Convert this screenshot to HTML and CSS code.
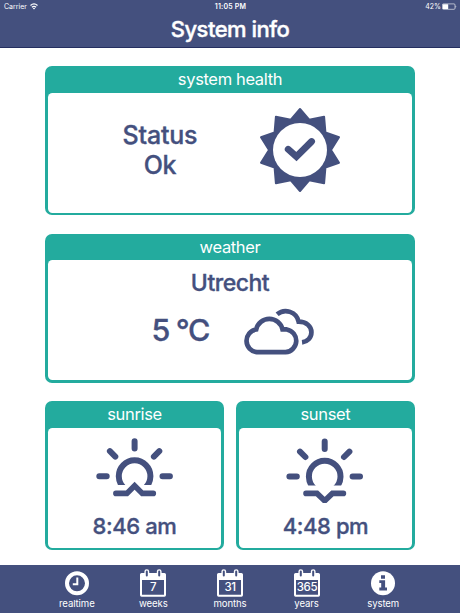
FILE: index.html
```html
<!DOCTYPE html>
<html lang="en">
<head>
<meta charset="utf-8">
<title>System info</title>
<link rel="stylesheet" href="styles.css">
</head>
<body>
<header class="top">
  <div class="status">
    <span class="carrier">Carrier
      <svg width="8" height="7" viewBox="0 0 8 7" fill="none" stroke="#fff" stroke-width="1.2"><path d="M.5 2.5Q4-.6 7.5 2.5M1.9 4.2Q4 2.4 6.1 4.2"/><path d="M2.8 5.2Q4 4.2 5.2 5.2L4 6.6z" fill="#fff" stroke="none"/></svg>
    </span>
    <span class="clock">11:05 PM</span>
    <span class="battery">42%
      <svg width="15" height="7" viewBox="0 0 15 7"><rect x=".4" y=".9" width="12.6" height="5.4" rx="1" fill="none" stroke="#fff" stroke-width=".6"/><rect x=".8" y="1.2" width="5.4" height="4.8" rx=".5" fill="#fff"/><path d="M13.6 2.4Q15 3.5 13.6 4.7z" fill="#fff"/></svg>
    </span>
  </div>
  <h1 class="title">System info</h1>
</header>

<main class="cards">
  <section class="card">
    <h2 class="card-head">system health</h2>
    <div class="card-body health">
      <p class="health-text">Status<br>Ok</p>
      <div class="health-icon">
        <svg width="84" height="88" viewBox="-42 -44 84 88">
          <path class="solid round" d="M0-41L9.200-30.300 24.100-33.200 25.400-17.600 39-12.700 31 0 39 12.700 25.400 17.600 24.100 33.200 9.200 30.300 0 41-9.200 30.300-24.100 33.200-25.400 17.600-39 12.700-31 0-39-12.700-25.400-17.600-24.100-33.200-9.200-30.300Z"/>
          <circle r="27" fill="#fff"/>
          <path class="check" d="M-11.800-.7L-3.600 6.600 11.600-8.500"/>
        </svg>
      </div>
    </div>
  </section>

  <section class="card">
    <h2 class="card-head">weather</h2>
    <div class="card-body">
      <p class="city">Utrecht</p>
      <div class="weather">
        <p class="temp">5 °C</p>
        <svg width="71.5" height="48" viewBox="0 0 70 47" class="line cloud">
          <path d="M13.500 44.200h28.200a11.200 11.200 0 0 0 1.200-22.200h-4.200a13.200 13.200 0 0 0-25.800 0A11.200 11.200 0 0 0 13.500 44.200z"/>
          <path d="M33.400 7.100A13 13 0 0 1 54.500 14.400C62 14.400 67 18.800 67 24.700C67 30 63 34 57.800 34.600"/>
        </svg>
      </div>
    </div>
  </section>

  <div class="pair">
    <section class="card">
      <h2 class="card-head">sunrise</h2>
      <div class="card-body sun">
        <svg width="78" height="66" viewBox="-38.600 -39.200 78 66" class="line">
          <clipPath id="horizon"><rect x="-30" y="-30" width="60" height="38.800"/></clipPath>
          <path d="M0-35v7.300M-24.700-25l5.400 5.400M24.700-25l-5.400 5.400M-35.300 0h7.400M35.300 0h-7.400"/>
          <path class="butt" clip-path="url(#horizon)" d="M-10.800 11.500A15.800 15.800 0 1 1 10.800 11.500"/>
          <path class="miter" d="M-18.700 17.200h11L0 9.600l7.700 7.600h11"/>
        </svg>
        <p class="time">8:46 am</p>
      </div>
    </section>
    <section class="card">
      <h2 class="card-head">sunset</h2>
      <div class="card-body sun">
        <svg width="78" height="66" viewBox="-38.700 -39.600 78 66" class="line">
          <path d="M0-35v7.300M-24.700-25l5.400 5.400M24.700-25l-5.400 5.400M-35.300 0h7.400M35.300 0h-7.400"/>
          <path class="butt" clip-path="url(#horizon)" d="M-10.800 11.500A15.800 15.800 0 1 1 10.800 11.500"/>
          <path class="miter" d="M-18.700 16.800h11L0 24.200l7.700-7.400h11"/>
        </svg>
        <p class="time">4:48 pm</p>
      </div>
    </section>
  </div>
</main>

<nav class="tabs">
  <a class="tab">
    <svg width="28" height="30" viewBox="0 0 28 30"><circle cx="14" cy="15.300" r="10" fill="none" stroke="#fff" stroke-width="4"/><path d="M14.300 9.500v6.800H9.800" fill="none" stroke="#fff" stroke-width="2"/></svg>
    <span>realtime</span>
  </a>
  <a class="tab">
    <svg width="28" height="30" viewBox="0 0 28 30"><use href="#cal"/><text class="day" x="14" y="23">7</text></svg>
    <span>weeks</span>
  </a>
  <a class="tab">
    <svg width="28" height="30" viewBox="0 0 28 30"><use href="#cal"/><text class="day" x="14" y="23">31</text></svg>
    <span>months</span>
  </a>
  <a class="tab">
    <svg width="28" height="30" viewBox="0 0 28 30">
      <defs><g id="cal">
        <path fill="#fff" fill-rule="evenodd" d="M2.600 4.900h22.800q1.600 0 1.600 1.600v20.600q0 1.600-1.600 1.600H2.600Q1 28.700 1 27.100V6.500Q1 4.900 2.600 4.900zM3 12v14.700h22V12z"/>
        <path d="M7.800 3.600v4M20.200 3.600v4" stroke="#fff" stroke-width="4.800" stroke-linecap="round"/>
        <path d="M7.800 3.600v4M20.200 3.600v4" stroke="#44507e" stroke-width="2" stroke-linecap="round"/>
      </g></defs>
      <use href="#cal"/><text class="day" x="14" y="23">365</text></svg>
    <span>years</span>
  </a>
  <a class="tab">
    <svg width="28" height="30" viewBox="0 0 28 30"><circle cx="14" cy="15.300" r="12" fill="#fff"/><path fill="#44507e" d="M12 7.300h4v3.400h-4zM10.300 12.300h5.800v7.200h1.900v2.900h-7.700v-2.900h1.900v-4.400h-1.900z"/></svg>
    <span>system</span>
  </a>
</nav>
</body>
</html>
```
FILE: styles.css
```css
* { box-sizing: border-box; }
body {
  margin: 0;
  height: 613px;
  display: flex;
  flex-direction: column;
  overflow: hidden;
  background: #fff;
  color: #44507e;
  font-family: Inter, "Liberation Sans", sans-serif;
}
h1, h2, p { margin: 0; }
svg { display: block; flex: none; }

.top {
  height: 48px;
  background: #44507e;
  border-bottom: 1px solid #252f60;
  color: #fff;
}
.status {
  display: grid;
  grid-template-columns: 1fr auto 1fr;
  height: 13px;
  padding: 0 3px 0 4px;
  align-items: center;
  font-size: 7px;
  line-height: 13px;
}
.carrier, .battery { display: flex; align-items: center; gap: 3px; }
.battery { justify-content: flex-end; gap: 1px; }
.clock { font-weight: 600; letter-spacing: .2px; }
.title {
  font-size: 22px;
  line-height: 32px;
  font-weight: 500;
  letter-spacing: -.5px;
  -webkit-text-stroke: .4px currentColor;
  text-align: center;
}

.cards {
  flex: 1;
  padding: 18.3px 45.3px 0;
  display: flex;
  flex-direction: column;
  gap: 18.3px;
}
.card {
  height: 149.2px;
  padding: 0 2.8px 2.8px;
  border-radius: 7px;
  background: #23ab9e;
  display: flex;
  flex-direction: column;
}
.card-head {
  height: 26.7px;
  line-height: 26px;
  font-size: 16.5px;
  font-weight: 400;
  letter-spacing: -.35px;
  text-align: center;
  color: #fff;
}
.card-body {
  flex: 1;
  background: #fff;
  border-radius: 4.5px;
}
.health {
  display: grid;
  grid-template-columns: 140px 140px;
  justify-content: center;
}
.health-text, .city, .temp, .time {
  font-weight: 500;
  -webkit-text-stroke: .35px currentColor;
}
.health-text {
  padding-top: 27px;
  font-size: 25px;
  line-height: 30px;
  letter-spacing: -.2px;
  text-align: center;
}
.health-icon { display: flex; justify-content: center; padding-top: 13px; }
.solid { fill: #44507e; }
.round { stroke: #44507e; stroke-width: 2; stroke-linejoin: round; }
.check { fill: none; stroke: #44507e; stroke-width: 6.8; stroke-linecap: round; stroke-linejoin: miter; }

.city {
  padding-top: 8px;
  font-size: 23px;
  line-height: 30px;
  letter-spacing: -.5px;
  text-align: center;
}
.weather { display: flex; padding-left: 103.5px; align-items: flex-start; }
.temp {
  width: 91.5px;
  padding-top: 12px;
  font-size: 30.5px;
  line-height: 40px;
  letter-spacing: -1.4px;
  white-space: nowrap;
}
.line { fill: none; stroke: #44507e; stroke-width: 6; stroke-linecap: round; }
.cloud { stroke-width: 4.6; stroke-linecap: butt; margin-top: 9px; }
.butt { stroke-linecap: butt; }
.miter { stroke-linejoin: miter; stroke-width: 5.6; }

.pair { display: grid; grid-template-columns: 1fr 1fr; gap: 12.4px; }
.sun { display: flex; flex-direction: column; align-items: center; padding-top: 9px; }
.time { font-size: 22px; line-height: 28px; padding-top: 9px; letter-spacing: -.4px; }

.tabs {
  height: 48px;
  padding: 0 38.5px;
  display: grid;
  grid-template-columns: repeat(5, 1fr);
  background: #44507e;
  color: #fff;
}
.tab { display: flex; flex-direction: column; align-items: center; padding-top: 2.5px; font-size: 9.6px; line-height: 12px; letter-spacing: -.1px; }
.day { fill: #fff; font-size: 11.5px; font-weight: 500; text-anchor: middle; letter-spacing: -.4px; }
```
